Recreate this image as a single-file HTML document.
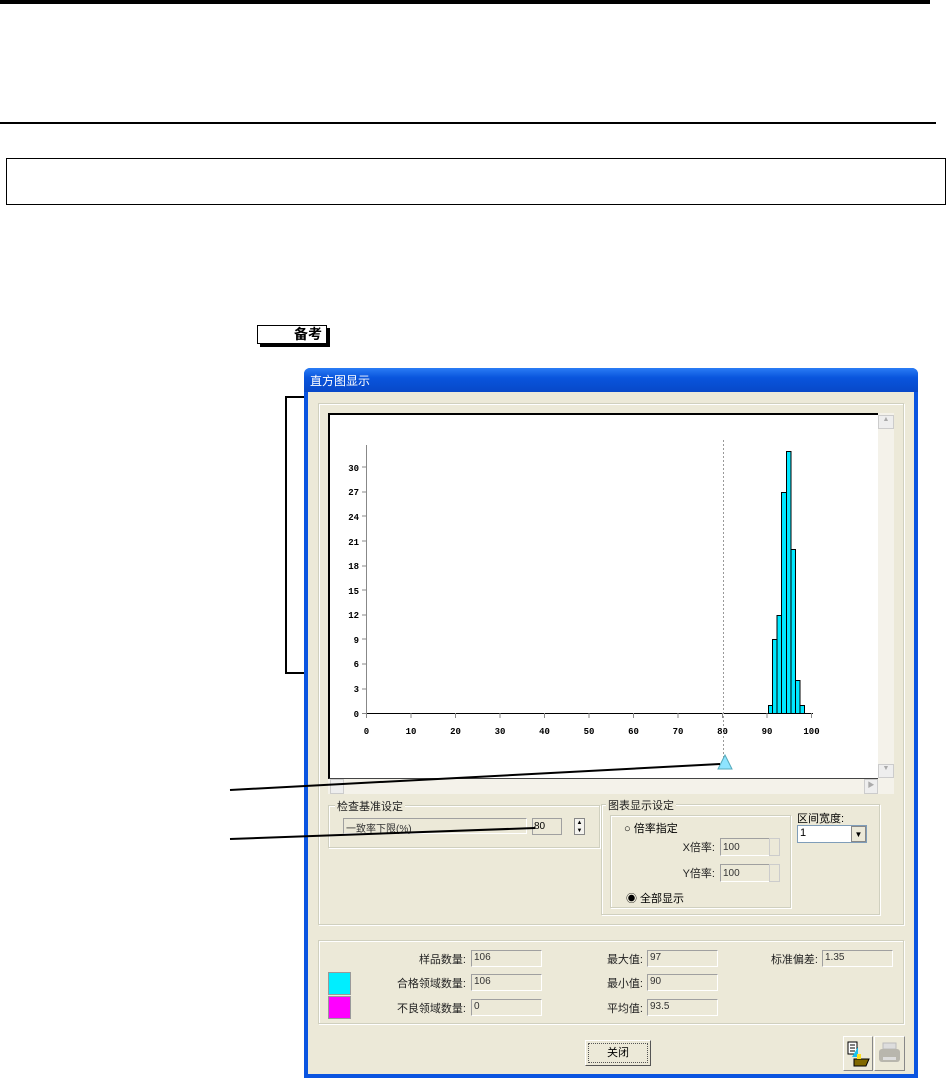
<!DOCTYPE html>
<html><head><meta charset="utf-8"><style>
*{margin:0;padding:0;box-sizing:border-box}
body{width:948px;height:1078px;background:#fff;position:relative;overflow:hidden;font-family:"Liberation Sans","Noto Sans CJK SC",sans-serif;font-size:11px;color:#000}
.a{position:absolute}
.grp{position:absolute;border:1px solid #d0d0bf;box-shadow:inset 1px 1px 0 #fff,1px 1px 0 #fff}
.lg{position:absolute;background:#ece9d8;padding:0 2px;top:-8px;font-size:11px;color:#222}
.tb{position:absolute;height:20px;border:1px solid;border-color:#a0a0a0 #fff #fff #a0a0a0;background:#ece9d8;font-size:10px;padding:3px 2px;color:#333}
.lbl{position:absolute;font-size:11px;text-align:right;color:#222}
</style></head><body>
<div class="a" style="left:0;top:0;width:930px;height:4px;background:#000"></div>
<div class="a" style="left:0;top:122px;width:936px;height:2px;background:#000"></div>
<div class="a" style="left:6px;top:158px;width:940px;height:47px;border:1px solid #000"></div>

<div class="a" style="left:257px;top:325px;width:70px;height:19px;border:1px solid #000;background:#fff;box-shadow:3px 3px 0 #000;font-size:14px;font-weight:bold;text-align:right;padding-right:4px;line-height:17px">备考</div>

<div class="a" style="left:285px;top:396px;width:20px;height:278px;border:2px solid #000;border-right:none"></div>

<div class="a" style="left:304px;top:368px;width:614px;height:710px;background:#0a54e0;border-radius:6px 6px 0 0"></div>
<div class="a" style="left:304px;top:368px;width:614px;height:24px;background:linear-gradient(#2a7cf5,#0955dd 40%,#0848c8);border-radius:6px 6px 0 0;color:#fff;font-size:12px;padding:4px 6px">直方图显示</div>
<div class="a" style="left:308px;top:392px;width:606px;height:682px;background:#ece9d8"></div>

<div class="grp" style="left:318px;top:403px;width:586px;height:522px"></div>
<div class="a" style="left:328px;top:413px;width:566px;height:381px;background:#f4f2ea"></div>
<div class="a" style="left:328px;top:413px;width:550px;height:366px;background:#fff;border-top:2px solid #000;border-left:2px solid #000;border-bottom:1px solid #444"></div>
<div class="a" style="left:878px;top:415px;width:16px;height:14px;border:1px solid #ccc;background:#eee;font-size:7px;color:#aaa;text-align:center">▲</div>
<div class="a" style="left:878px;top:764px;width:16px;height:14px;border:1px solid #ccc;background:#eee;font-size:7px;color:#aaa;text-align:center">▼</div>
<div class="a" style="left:330px;top:779px;width:14px;height:15px;border:1px solid #ccc;background:#eee"></div>
<div class="a" style="left:864px;top:779px;width:14px;height:15px;border:1px solid #ccc;background:#eee;font-size:7px;color:#aaa;text-align:center">▶</div>

<svg class="a" style="left:0;top:0" width="948" height="1078" font-family="Liberation Mono,monospace" font-size="9" font-weight="bold">
<line x1="366.5" y1="445" x2="366.5" y2="713" stroke="#888"/>
<line x1="366" y1="713.5" x2="813" y2="713.5" stroke="#000"/>
<g stroke="#888">
<line x1="362" y1="713.5" x2="366" y2="713.5"/><line x1="362" y1="689" x2="366" y2="689"/><line x1="362" y1="664" x2="366" y2="664"/><line x1="362" y1="639" x2="366" y2="639"/><line x1="362" y1="615" x2="366" y2="615"/><line x1="362" y1="590" x2="366" y2="590"/><line x1="362" y1="566" x2="366" y2="566"/><line x1="362" y1="541" x2="366" y2="541"/><line x1="362" y1="516" x2="366" y2="516"/><line x1="362" y1="492" x2="366" y2="492"/><line x1="362" y1="467" x2="366" y2="467"/>
</g>
<g text-anchor="end">
<text x="359" y="717">0</text><text x="359" y="692">3</text><text x="359" y="667">6</text><text x="359" y="643">9</text><text x="359" y="618">12</text><text x="359" y="594">15</text><text x="359" y="569">18</text><text x="359" y="545">21</text><text x="359" y="520">24</text><text x="359" y="495">27</text><text x="359" y="471">30</text>
</g>
<g stroke="#888">
<line x1="366.5" y1="713" x2="366.5" y2="718"/><line x1="411" y1="713" x2="411" y2="718"/><line x1="455.5" y1="713" x2="455.5" y2="718"/><line x1="500" y1="713" x2="500" y2="718"/><line x1="544.5" y1="713" x2="544.5" y2="718"/><line x1="589" y1="713" x2="589" y2="718"/><line x1="633.5" y1="713" x2="633.5" y2="718"/><line x1="678" y1="713" x2="678" y2="718"/><line x1="722.5" y1="713" x2="722.5" y2="718"/><line x1="767" y1="713" x2="767" y2="718"/><line x1="811.5" y1="713" x2="811.5" y2="718"/>
</g>
<g text-anchor="middle">
<text x="366.5" y="734">0</text><text x="411" y="734">10</text><text x="455.5" y="734">20</text><text x="500" y="734">30</text><text x="544.5" y="734">40</text><text x="589" y="734">50</text><text x="633.5" y="734">60</text><text x="678" y="734">70</text><text x="722.5" y="734">80</text><text x="767" y="734">90</text><text x="811.5" y="734">100</text>
</g>
<line x1="723.5" y1="440" x2="723.5" y2="765" stroke="#999" stroke-dasharray="2,2"/>
<g fill="#00e8ff" stroke="#000" stroke-width="1">
<rect x="768.5" y="705.5" width="4" height="8"/>
<rect x="772.5" y="639.5" width="4.5" height="74"/>
<rect x="777" y="615.5" width="4.5" height="98"/>
<rect x="781.5" y="492.5" width="5" height="221"/>
<rect x="786.5" y="451.5" width="4.5" height="262"/>
<rect x="791" y="549.5" width="4.5" height="164"/>
<rect x="795.5" y="680.5" width="4.5" height="33"/>
<rect x="800" y="705.5" width="4.5" height="8"/>
</g>
<polygon points="725,755 718,769 732,769" fill="#8ee4ff" stroke="#5ab"/>
</svg>

<div class="grp" style="left:328px;top:805px;width:272px;height:43px"><span class="lg" style="left:6px">检查基准设定</span></div>
<div class="tb" style="left:343px;top:818px;width:184px;height:16px;padding:1px 2px">一致率下限(%)</div>
<div class="a" style="left:532px;top:818px;width:30px;height:17px;border:1px solid #a0a0a0;background:#ece9d8;font-size:10px;padding:2px 1px">80</div>
<div class="a" style="left:574px;top:818px;width:11px;height:17px;border:1px solid #888;background:#f4f3ee;font-size:6px;line-height:8px;text-align:center">▲<br>▼</div>

<div class="grp" style="left:601px;top:804px;width:279px;height:111px"><span class="lg" style="left:4px">图表显示设定</span></div>
<div class="grp" style="left:610px;top:815px;width:181px;height:93px"></div>
<div class="a" style="left:624px;top:820px;font-size:11px">○ 倍率指定</div>
<div class="lbl" style="left:660px;top:839px;width:55px">X倍率:</div>
<div class="tb" style="left:720px;top:838px;width:50px;height:18px">100</div>
<div class="a" style="left:769px;top:838px;width:11px;height:18px;border:1px solid #ccc"></div>
<div class="lbl" style="left:660px;top:865px;width:55px">Y倍率:</div>
<div class="tb" style="left:720px;top:864px;width:50px;height:18px">100</div>
<div class="a" style="left:769px;top:864px;width:11px;height:18px;border:1px solid #ccc"></div>
<div class="a" style="left:626px;top:890px;font-size:11px">◉ 全部显示</div>
<div class="a" style="left:797px;top:810px;font-size:11px">区间宽度:</div>
<div class="a" style="left:797px;top:825px;width:70px;height:18px;background:#fff;border:1px solid #7f9db9;font-size:11px;padding:1px 2px">1</div>
<div class="a" style="left:851px;top:826px;width:15px;height:16px;border:1px solid #888;background:#ece9d8;font-size:8px;text-align:center;line-height:15px">▼</div>

<div class="grp" style="left:318px;top:940px;width:586px;height:84px"></div>
<div class="a" style="left:328px;top:972px;width:23px;height:23px;background:#00eeff;border:1px solid #999"></div>
<div class="a" style="left:328px;top:996px;width:23px;height:23px;background:#ff00ff;border:1px solid #999"></div>
<div class="lbl" style="left:380px;top:951px;width:86px">样品数量:</div>
<div class="lbl" style="left:380px;top:975px;width:86px">合格领域数量:</div>
<div class="lbl" style="left:380px;top:1000px;width:86px">不良领域数量:</div>
<div class="tb" style="left:471px;top:950px;width:71px;height:17px;padding:1px 2px">106</div>
<div class="tb" style="left:471px;top:974px;width:71px;height:17px;padding:1px 2px">106</div>
<div class="tb" style="left:471px;top:999px;width:71px;height:17px;padding:1px 2px">0</div>
<div class="lbl" style="left:560px;top:951px;width:83px">最大值:</div>
<div class="lbl" style="left:560px;top:975px;width:83px">最小值:</div>
<div class="lbl" style="left:560px;top:1000px;width:83px">平均值:</div>
<div class="tb" style="left:647px;top:950px;width:71px;height:17px;padding:1px 2px">97</div>
<div class="tb" style="left:647px;top:974px;width:71px;height:17px;padding:1px 2px">90</div>
<div class="tb" style="left:647px;top:999px;width:71px;height:17px;padding:1px 2px">93.5</div>
<div class="lbl" style="left:740px;top:951px;width:78px">标准偏差:</div>
<div class="tb" style="left:822px;top:950px;width:71px;height:17px;padding:1px 2px">1.35</div>

<div class="a" style="left:585px;top:1040px;width:66px;height:26px;border:1px solid;border-color:#fff #555 #555 #fff;background:#ece9d8;text-align:center;font-size:11px;line-height:22px"><div style="margin:2px;border:1px dotted #555;height:20px;line-height:18px">关闭</div></div>
<div class="a" style="left:843px;top:1036px;width:30px;height:35px;border:1px solid;border-color:#fff #888 #888 #fff;background:#ece9d8">
<svg width="28" height="33"><rect x="4" y="5" width="9" height="12" fill="#fff" stroke="#000"/><line x1="6" y1="8" x2="11" y2="8" stroke="#000"/><line x1="6" y1="11" x2="11" y2="11" stroke="#000"/><line x1="6" y1="14" x2="11" y2="14" stroke="#000"/><polygon points="14,10 14,20 8,20" fill="#18c0f0"/><polygon points="10,22 25,22 22,29 10,29" fill="#806800" stroke="#000"/><polygon points="13,17 17,17 17,22 13,22" fill="#ffe020"/></svg></div>
<div class="a" style="left:874px;top:1036px;width:31px;height:35px;border:1px solid;border-color:#fff #888 #888 #fff;background:#ece9d8">
<svg width="29" height="33"><rect x="8" y="6" width="13" height="6" fill="#ddd" stroke="#bbb"/><rect x="4" y="12" width="21" height="13" rx="3" fill="#b8b6ad"/><rect x="8" y="20" width="13" height="3" fill="#ddd"/></svg></div>

<svg class="a" style="left:0;top:0;pointer-events:none" width="948" height="1078">
<line x1="230" y1="790" x2="720" y2="764" stroke="#000" stroke-width="2"/>
<line x1="230" y1="839" x2="535" y2="828" stroke="#000" stroke-width="2"/>
</svg>
</body></html>
